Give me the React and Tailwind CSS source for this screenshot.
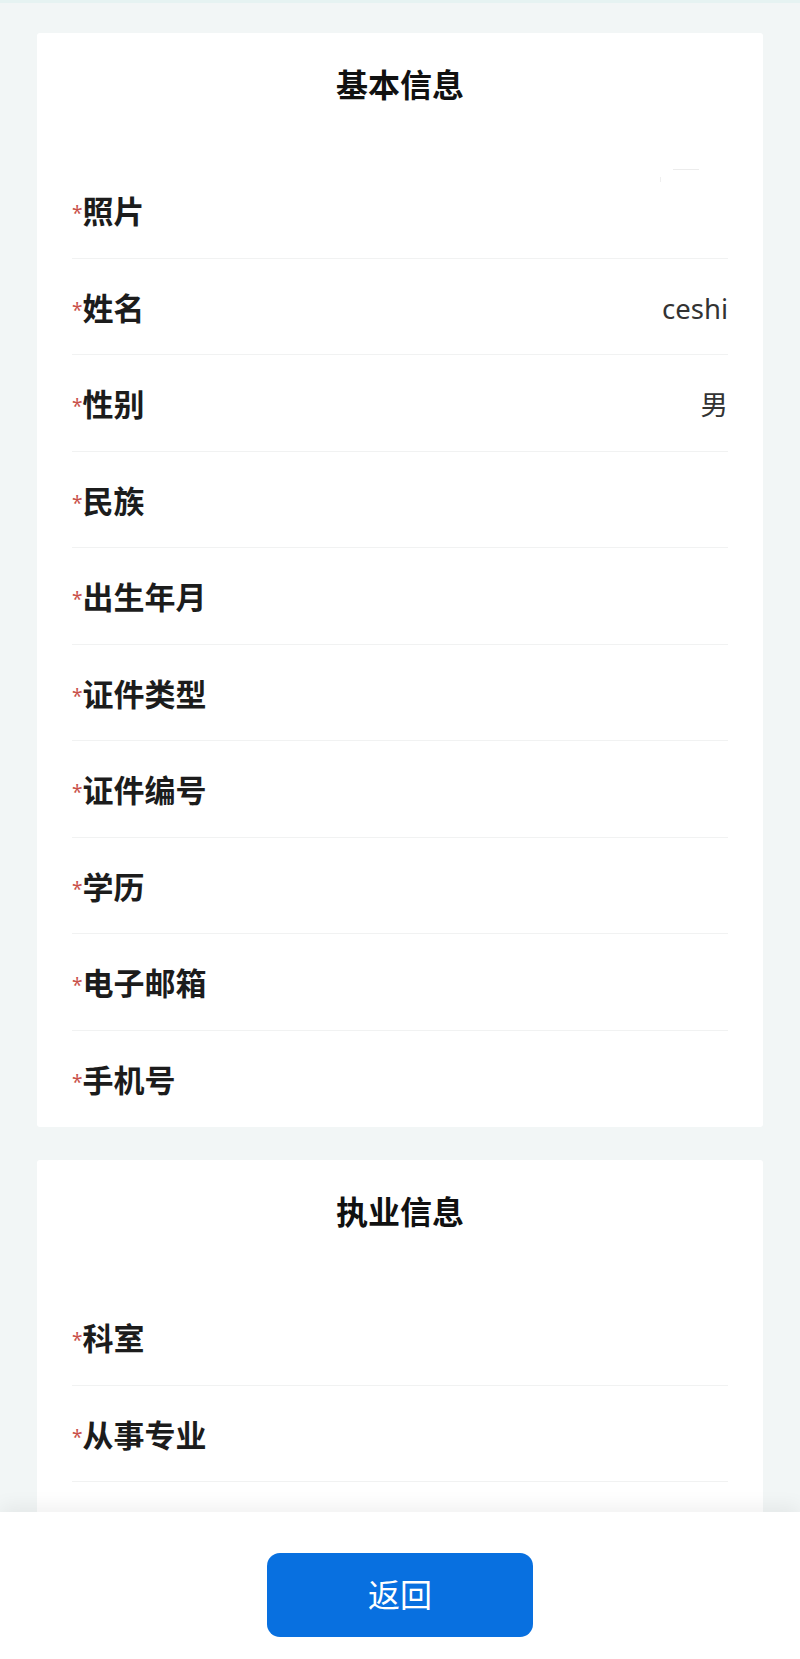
const basicFields = [
  { label: "照片", photo: true },
  { label: "姓名", value: "ceshi" },
  { label: "性别", value: "男" },
  { label: "民族" },
  { label: "出生年月" },
  { label: "证件类型" },
  { label: "证件编号" },
  { label: "学历" },
  { label: "电子邮箱" },
  { label: "手机号", last: true },
];

const practiceFields = [
  { label: "科室" },
  { label: "从事专业" },
  { label: "职称" },
  { label: "执业证书编号" },
];

function InfoRow({ label, value, photo, last }) {
  return (
    <div
      className={`flex h-[96.5px] items-center justify-between pt-1 ${
        last ? "" : "border-b border-[#f1f2f2]"
      }`}
    >
      <div className="flex items-center">
        <span className="mt-[4px] text-[19px] leading-none text-[#c9514b]">*</span>
        <span className="text-[31px] font-bold leading-none text-[#1c1c1c]">
          {label}
        </span>
      </div>

      {photo && (
        <div className="relative -mt-[14px] h-[84px] w-[72px]">
          <div className="absolute left-[17px] top-[6px] h-px w-[26px] bg-[#ececec]" />
          <div className="absolute left-[4px] top-[14px] h-[5px] w-px bg-[#efefef]" />
        </div>
      )}

      {value && (
        <span className="text-[27.5px] leading-none text-[#333333]">{value}</span>
      )}
    </div>
  );
}

function Card({ title, fields }) {
  return (
    <section className="rounded-[3px] bg-white px-[35px]">
      <h2 className="pb-[57px] pt-[32px] text-center text-[32px] font-bold leading-[40px] text-[#111111]">
        {title}
      </h2>
      {fields.map((field) => (
        <InfoRow key={field.label} {...field} />
      ))}
    </section>
  );
}

export default function App() {
  return (
    <div
      className="relative h-[1659px] overflow-hidden bg-[#f2f6f6]"
      style={{ fontFamily: '"Noto Sans", "Noto Sans CJK SC", sans-serif' }}
    >
      <div className="h-[3px] bg-[#e6f3f2]" />

      <div className="flex flex-col gap-[33px] px-[37px] pt-[30px]">
        <Card title="基本信息" fields={basicFields} />
        <Card title="执业信息" fields={practiceFields} />
      </div>

      <div className="absolute bottom-0 left-0 right-0 flex h-[147px] justify-center bg-white pt-[41px] shadow-[0_-6px_18px_rgba(0,0,0,0.06)]">
        <button
          type="button"
          className="h-[84px] w-[266px] rounded-[13px] bg-[#0870e0] text-[32px] leading-none text-white"
        >
          返回
        </button>
      </div>
    </div>
  );
}
